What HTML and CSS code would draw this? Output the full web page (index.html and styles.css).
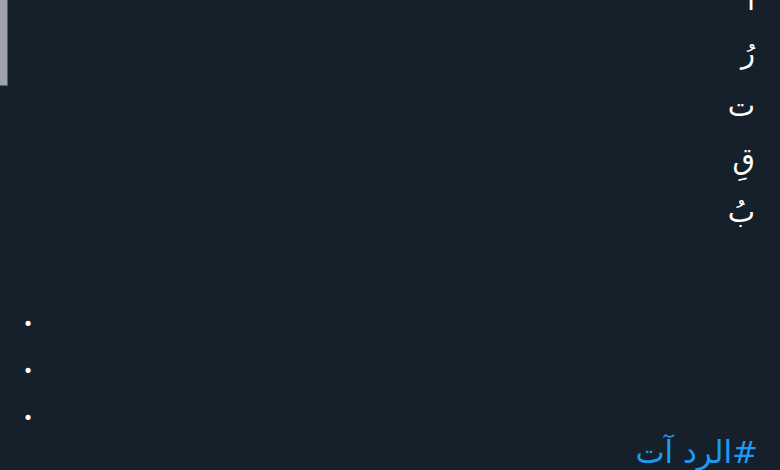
FILE: index.html
```html
<!DOCTYPE html>
<html lang="ar">
<head>
    <title>تغريدة</title>
    <link rel="stylesheet" href="styles.css">
</head>
<body>
    <div class="scroll-thumb"></div>

    <main class="tweet" dir="rtl">
        <div class="letters">
            <div>ا</div>
            <div>رُ</div>
            <div>ت</div>
            <div>قِ</div>
            <div>بُ</div>
        </div>

        <div class="dots" dir="ltr">
            <div>.</div>
            <div>.</div>
            <div>.</div>
        </div>

        <div class="hashtag"><a href="#">#الرد آت</a></div>
    </main>
</body>
</html>
```

FILE: styles.css
```css
html, body {
    height: 100%;
}
body {
    margin: 0;
    padding: 0;
    background-color: #15202b;
    color: #ffffff;
    font-family: "DejaVu Sans", sans-serif;
    overflow: hidden;
}
.scroll-thumb {
    position: absolute;
    top: 0;
    left: 0;
    width: 7px;
    height: 85px;
    background-color: #9ea3ab;
    border-right: 1px solid #56606b;
    border-bottom: 1px solid #56606b;
}
.tweet {
    font-size: 29px;
    padding: 0 25px 0 24px;
}
.letters {
    line-height: 53px;
    margin-top: -26px;
    text-align: right;
}
.dots {
    font-family: Lato, sans-serif;
    font-size: 34px;
    font-weight: bold;
    line-height: 47px;
    margin-top: 50px;
    text-align: left;
}
.hashtag {
    font-size: 31px;
    line-height: 47px;
    margin-top: -1px;
    margin-right: -3px;
    text-align: right;
}
.hashtag a {
    color: #1d9bf0;
    text-decoration: none;
}
```
